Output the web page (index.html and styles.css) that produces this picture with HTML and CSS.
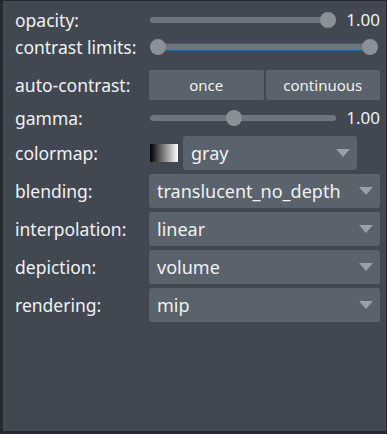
FILE: index.html
```html
<!DOCTYPE html>
<html>
<head>
<meta charset="utf-8">
<link rel="stylesheet" href="styles.css">
</head>
<body>
<div class="panel">
  <div class="row r-opacity">
    <div class="label">opacity:</div>
    <div class="ctrl">
      <div class="slider">
        <div class="track"></div>
        <div class="handle" style="left: 100%"></div>
      </div>
      <div class="value">1.00</div>
    </div>
  </div>
  <div class="row r-contrast">
    <div class="label">contrast limits:</div>
    <div class="ctrl">
      <div class="range">
        <div class="range-track"></div>
        <div class="handle" style="left: 0%"></div>
        <div class="handle" style="left: 100%"></div>
      </div>
    </div>
  </div>
  <div class="row r-auto">
    <div class="label">auto-contrast:</div>
    <div class="ctrl buttons">
      <button class="btn">once</button>
      <button class="btn">continuous</button>
    </div>
  </div>
  <div class="row r-gamma">
    <div class="label">gamma:</div>
    <div class="ctrl">
      <div class="slider">
        <div class="track"></div>
        <div class="handle" style="left: 44.6%"></div>
      </div>
      <div class="value">1.00</div>
    </div>
  </div>
  <div class="row r-combo">
    <div class="label">colormap:</div>
    <div class="ctrl cmap">
      <div class="swatch"></div>
      <div class="combo narrow"><span>gray</span><i class="arrow"></i></div>
    </div>
  </div>
  <div class="row r-combo">
    <div class="label">blending:</div>
    <div class="ctrl"><div class="combo"><span>translucent_no_depth</span><i class="arrow"></i></div></div>
  </div>
  <div class="row r-combo">
    <div class="label">interpolation:</div>
    <div class="ctrl"><div class="combo"><span>linear</span><i class="arrow"></i></div></div>
  </div>
  <div class="row r-combo">
    <div class="label">depiction:</div>
    <div class="ctrl"><div class="combo"><span>volume</span><i class="arrow"></i></div></div>
  </div>
  <div class="row r-combo">
    <div class="label">rendering:</div>
    <div class="ctrl"><div class="combo"><span>mip</span><i class="arrow"></i></div></div>
  </div>
</div>
</body>
</html>
```

FILE: styles.css
```css
html, body {
  margin: 0;
  padding: 0;
  background: #262930;
  width: 387px;
  height: 434px;
  overflow: hidden;
}
body {
  font-family: "Noto Sans", "Open Sans", sans-serif;
  font-size: 17.5px;
  color: #f0f1f2;
}
.panel {
  margin: 1px 1px 0 3px;
  height: 430px;
  background: #414851;
  box-sizing: border-box;
  padding: 0 6px 0 12px;
  display: flex;
  flex-direction: column;
}
.row {
  display: flex;
  align-items: center;
}
.label {
  width: 134px;
  flex: none;
  line-height: 22px;
  white-space: nowrap;
}
.ctrl {
  flex: 1;
  display: flex;
  align-items: center;
}
.r-opacity { height: 24px; margin-top: 7px; }
.r-contrast { height: 24px; margin-top: 3px; }
.r-auto { height: 30px; margin-top: 11px; }
.r-gamma { height: 24px; margin-top: 6px; }
.r-gamma + .r-combo { margin-top: 6px; }
.r-combo { height: 34px; margin-top: 4px; }

.slider {
  position: relative;
  flex: 1;
  height: 16px;
  margin: 0 52px 0 9px;
}
.slider .track {
  position: absolute;
  left: -8px;
  right: -8px;
  top: 5px;
  height: 6px;
  border-radius: 3px;
  background: #6f757e;
}
.handle {
  position: absolute;
  top: 0;
  width: 16px;
  height: 16px;
  margin-left: -8px;
  border-radius: 50%;
  background: #8a9098;
}
.value {
  width: 44px;
  text-align: right;
  flex: none;
  margin-left: -44px;
  font-size: 17px;
  line-height: 22px;
}

.range {
  position: relative;
  flex: 1;
  height: 16px;
  margin: 0 10px 0 9px;
}
.range-track {
  position: absolute;
  left: 0;
  right: 0;
  top: 4px;
  height: 8px;
  box-sizing: border-box;
  border-top: 1px solid #1d6a94;
  border-bottom: 1px solid #1d6a94;
  background: #6f757e;
}
.buttons {
  gap: 2px;
  height: 30px;
}
.btn {
  flex: 1;
  height: 30px;
  border: none;
  border-radius: 2px;
  background: #5a626c;
  color: #f0f1f2;
  font-family: "Noto Sans", "Open Sans", sans-serif;
  font-size: 15px;
  padding: 0;
}
.cmap { gap: 5px; }
.swatch {
  width: 28px;
  height: 18px;
  margin-left: 1px;
  background: linear-gradient(to right, #000, #fff);
  flex: none;
}
.combo {
  position: relative;
  flex: 1;
  height: 34px;
  border-radius: 3px;
  background: #5a626c;
  display: flex;
  align-items: center;
  padding-left: 8px;
  font-size: 18px;
}
.combo.narrow { margin-right: 23px; }
.arrow {
  position: absolute;
  right: 7px;
  top: 13px;
  width: 0;
  height: 0;
  border-left: 7px solid transparent;
  border-right: 7px solid transparent;
  border-top: 8px solid #9aa0a7;
}
```
